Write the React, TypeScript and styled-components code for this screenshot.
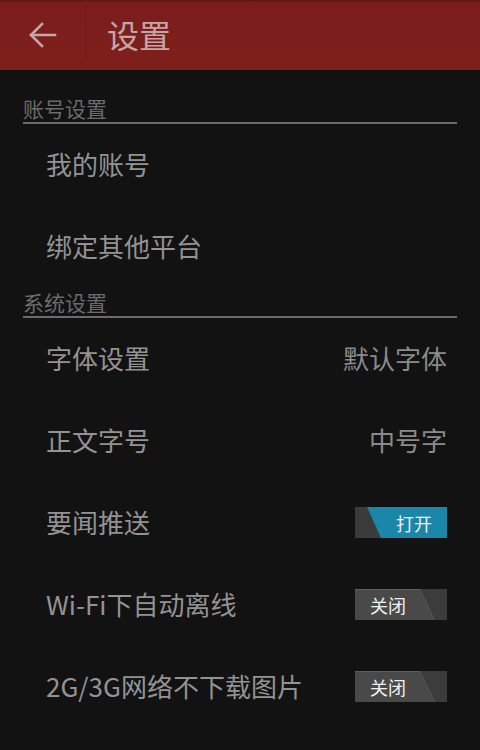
import React from "react";
import styled, { createGlobalStyle } from "styled-components";

const Global = createGlobalStyle`
  html, body { margin: 0; padding: 0; background: #121212; }
  body { font-family: "Noto Sans CJK SC", "Noto Sans", sans-serif; }
`;

const Page = styled.div`
  width: 480px;
  height: 750px;
  background: #121212;
  display: flex;
  flex-direction: column;
  overflow: hidden;
`;

const Header = styled.header`
  height: 70px;
  flex: none;
  background: linear-gradient(#5e1714 0px, #7b1e1b 3px, #7e1f1c 100%);
  display: flex;
  align-items: center;
`;

const BackButton = styled.div`
  width: 85px;
  height: 100%;
  display: flex;
  align-items: center;
  justify-content: flex-start;
  padding-left: 27px;
  box-sizing: border-box;
`;

const Divider = styled.div`
  width: 1px;
  height: 54px;
  background: #6d1b18;
  align-self: center;
  margin-top: -6px;
`;

const Title = styled.h1`
  margin: -2px 0 0 21px;
  font-size: 32px;
  font-weight: 400;
  color: #c4a6a6;
  line-height: 1;
`;

const Section = styled.div<{ $top: number }>`
  margin: ${(p) => p.$top}px 23px 0;
  border-bottom: 2px solid #6c6c6c;
  padding-bottom: 2px;
`;

const SectionTitle = styled.div`
  font-size: 21px;
  line-height: 24px;
  color: #6b6b6b;
`;

const Row = styled.div`
  height: 82px;
  flex: none;
  display: flex;
  align-items: center;
  justify-content: space-between;
  padding: 0 33px 3px 46px;
  box-sizing: border-box;
`;

const Label = styled.span`
  font-size: 26px;
  color: #939393;
`;

const Value = styled.span`
  font-size: 26px;
  color: #8a8a8a;
`;

const Toggle = styled.div<{ $on: boolean }>`
  position: relative;
  width: 92px;
  height: 31px;
  background: ${(p) => (p.$on ? "#3b3b3b" : "#494949")};
  box-shadow: ${(p) => (p.$on ? "none" : "inset 0 1px 0 #5e5e5e")};
  overflow: hidden;
  margin-top: 2px;
`;

const ToggleFill = styled.div<{ $on: boolean }>`
  position: absolute;
  top: 0;
  bottom: 0;
  left: 0;
  right: 0;
  ${(p) =>
    p.$on
      ? `background: #1a86a9; clip-path: polygon(12px 0, 100% 0, 100% 100%, 26px 100%);`
      : `background: #3c3c3c; clip-path: polygon(64px 0, 100% 0, 100% 100%, 79px 100%);`}
`;

const ToggleEdge = styled.div`
  position: absolute;
  inset: 0;
  background: #5a5a5a;
  clip-path: polygon(64px 0, 65px 0, 80px 100%, 79px 100%);
`;

const ToggleText = styled.span<{ $on: boolean }>`
  position: absolute;
  top: 0;
  bottom: 0;
  ${(p) => (p.$on ? "left: 41px;" : "left: 15px;")}
  display: flex;
  align-items: center;
  font-size: 18px;
  color: #f0f0f0;
  line-height: 1;
`;

const Switch = ({ on }: { on: boolean }) => (
  <Toggle $on={on}>
    <ToggleFill $on={on} />
    {!on && <ToggleEdge />}
    <ToggleText $on={on}>{on ? "打开" : "关闭"}</ToggleText>
  </Toggle>
);

export default function App() {
  return (
    <Page>
      <Global />
      <Header>
        <BackButton>
          <svg width="30" height="28" viewBox="0 0 30 28" fill="none">
            <path d="M28 14H4M15 3L4 14L15 25" stroke="#c3a9a9" strokeWidth="2.6" strokeLinecap="square" />
          </svg>
        </BackButton>
        <Divider />
        <Title>设置</Title>
      </Header>
      <Section $top={26}>
        <SectionTitle>账号设置</SectionTitle>
      </Section>
      <Row>
        <Label>我的账号</Label>
      </Row>
      <Row>
        <Label>绑定其他平台</Label>
      </Row>
      <Section $top={2}>
        <SectionTitle>系统设置</SectionTitle>
      </Section>
      <Row>
        <Label>字体设置</Label>
        <Value>默认字体</Value>
      </Row>
      <Row>
        <Label>正文字号</Label>
        <Value>中号字</Value>
      </Row>
      <Row>
        <Label>要闻推送</Label>
        <Switch on={true} />
      </Row>
      <Row>
        <Label>Wi-Fi下自动离线</Label>
        <Switch on={false} />
      </Row>
      <Row>
        <Label>2G/3G网络不下载图片</Label>
        <Switch on={false} />
      </Row>
    </Page>
  );
}
